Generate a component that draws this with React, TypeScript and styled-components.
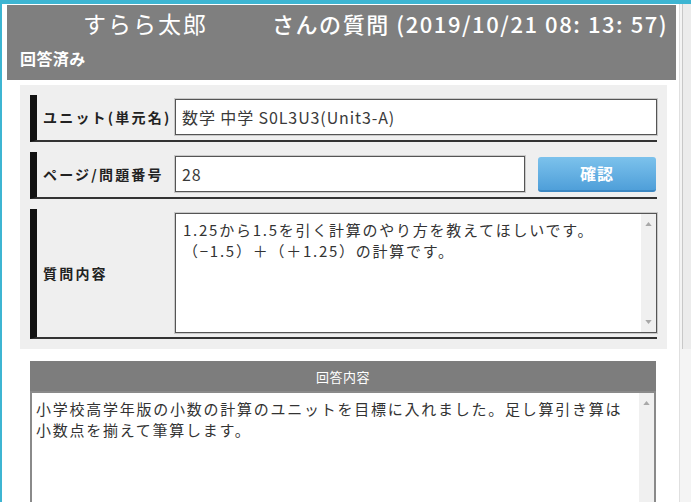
import React from 'react'
import styled, { createGlobalStyle } from 'styled-components'

const GlobalStyle = createGlobalStyle`
  html, body {
    margin: 0;
    padding: 0;
    background: #ffffff;
  }
  body {
    font-family: "Noto Sans CJK JP", "Noto Sans", "Liberation Sans", sans-serif;
    color: #333333;
  }
`

type Row = {
  label: string
  value: string
  withButton?: boolean
}

const rows: Row[] = [
  { label: 'ユニット(単元名)', value: '数学 中学 S0L3U3(Unit3-A)' },
  { label: 'ページ/問題番号', value: '28', withButton: true },
]

const questionLines = [
  '1.25から1.5を引く計算のやり方を教えてほしいです。',
  '（−1.5）＋（＋1.25）の計算です。',
]

const answerLines = [
  '小学校高学年版の小数の計算のユニットを目標に入れました。足し算引き算は',
  '小数点を揃えて筆算します。',
]

function ScrollTrack({ showDown = true }: { showDown?: boolean }) {
  return (
    <Track>
      <Arrow viewBox="0 0 8 5">
        <path d="M0 5 L4 0 L8 5 Z" fill="#a8a8a8" />
      </Arrow>
      {showDown && (
        <Arrow viewBox="0 0 8 5">
          <path d="M0 0 L4 5 L8 0 Z" fill="#a8a8a8" />
        </Arrow>
      )}
    </Track>
  )
}

export default function App() {
  return (
    <>
      <GlobalStyle />
      <Page>
        <Main>
          <Header>
            <TitleLine>
              <UserName>すらら太郎</UserName>
              <TitleText>さんの質問 (2019/10/21 08: 13: 57)</TitleText>
            </TitleLine>
            <Status>回答済み</Status>
          </Header>

          <FormPanel>
            {rows.map((row) => (
              <FieldRow key={row.label}>
                <Label>{row.label}</Label>
                <FieldBody>
                  <Input $narrow={row.withButton}>{row.value}</Input>
                  {row.withButton && <ConfirmButton type="button">確認</ConfirmButton>}
                </FieldBody>
              </FieldRow>
            ))}
            <FieldRow $tall>
              <Label>質問内容</Label>
              <FieldBody>
                <TextBox $height={120}>
                  <TextContent>
                    {questionLines.map((line) => (
                      <div key={line}>{line}</div>
                    ))}
                  </TextContent>
                  <ScrollTrack />
                </TextBox>
              </FieldBody>
            </FieldRow>
          </FormPanel>

          <AnswerSection>
            <AnswerHeader>回答内容</AnswerHeader>
            <AnswerBox>
              <TextContent $loose>
                {answerLines.map((line) => (
                  <div key={line}>{line}</div>
                ))}
              </TextContent>
              <ScrollTrack showDown={false} />
            </AnswerBox>
          </AnswerSection>
        </Main>
        <PageScroll>
          <PageThumb />
        </PageScroll>
      </Page>
    </>
  )
}

const Page = styled.div`
  width: 691px;
  height: 502px;
  box-sizing: border-box;
  border-top: 4px solid #3db5d2;
  display: flex;
  overflow: hidden;
`

const Main = styled.div`
  flex: 1;
  border-left: 2px solid #3db5d2;
  padding: 1px 3px 0 5px;
  display: flex;
  flex-direction: column;
  min-width: 0;
`

const Header = styled.header`
  flex-shrink: 0;
  background: #7f7f7f;
  color: #ffffff;
  height: 75px;
  box-sizing: border-box;
  padding: 4px 0 0 0;
`

const TitleLine = styled.div`
  display: flex;
  align-items: baseline;
  height: 28px;
  line-height: 28px;
  padding-left: 76px;
`

const UserName = styled.span`
  font-size: 23px;
  letter-spacing: 2px;
  width: 189px;
  white-space: nowrap;
`

const TitleText = styled.span`
  font-size: 22px;
  font-weight: 500;
  letter-spacing: 1.55px;
  white-space: nowrap;
`

const Status = styled.div`
  margin-top: 11px;
  line-height: 20px;
  padding-left: 13px;
  font-size: 16px;
  font-weight: bold;
  letter-spacing: 0.4px;
`

const FormPanel = styled.section`
  flex-shrink: 0;
  margin: 5px 9px 0 13px;
  background: #efefef;
  padding: 10px;
  display: flex;
  flex-direction: column;
  gap: 10px;
`

const FieldRow = styled.div<{ $tall?: boolean }>`
  display: flex;
  align-items: center;
  height: ${({ $tall }) => ($tall ? '130px' : '47px')};
  box-sizing: border-box;
  border-left: 7px solid #111111;
  border-bottom: 2px solid #333333;
  padding: 4px 0 5px 0;
`

const Label = styled.div`
  width: 138px;
  flex-shrink: 0;
  box-sizing: border-box;
  padding-left: 6px;
  font-size: 14px;
  font-weight: bold;
  letter-spacing: 2.2px;
  color: #222222;
  white-space: nowrap;
`

const FieldBody = styled.div`
  flex: 1;
  display: flex;
  align-items: center;
  gap: 13px;
  height: 100%;
`

const Input = styled.div<{ $narrow?: boolean }>`
  width: ${({ $narrow }) => ($narrow ? '350px' : '482px')};
  height: 36px;
  box-sizing: border-box;
  background: #ffffff;
  border: 1px solid #555555;
  box-shadow: 0 0 0 1px #c9c9c9;
  padding: 0 6px;
  display: flex;
  align-items: center;
  font-size: 16px;
  letter-spacing: 0.9px;
  color: #3a3a3a;
  white-space: nowrap;
`

const ConfirmButton = styled.button`
  width: 118px;
  height: 35px;
  border: none;
  border-bottom: 2px solid #3b87c2;
  border-radius: 3px;
  background: linear-gradient(#7cc2ec, #4f9fd9);
  color: #ffffff;
  font-family: inherit;
  font-size: 16px;
  font-weight: bold;
  letter-spacing: 1px;
  padding: 0;
`

const TextBox = styled.div<{ $height: number }>`
  width: 482px;
  height: ${({ $height }) => $height}px;
  box-sizing: border-box;
  background: #ffffff;
  border: 1px solid #555555;
  box-shadow: 0 0 0 1px #c9c9c9;
  display: flex;
`

const TextContent = styled.div<{ $loose?: boolean }>`
  flex: 1;
  padding: ${({ $loose }) => ($loose ? '5px 4px' : '5px 7px')};
  font-size: 15px;
  line-height: 21px;
  letter-spacing: 1.75px;
  color: #333333;
  white-space: nowrap;
  overflow: hidden;
`

const Track = styled.div`
  width: 15px;
  flex-shrink: 0;
  background: #f0f0f0;
  display: flex;
  flex-direction: column;
  justify-content: space-between;
  align-items: center;
  padding: 8px 0;
`

const Arrow = styled.svg`
  width: 7px;
  height: 4px;
`

const AnswerSection = styled.section`
  margin: 12px 20px 0 23px;
  display: flex;
  flex-direction: column;
  flex: 1;
  min-height: 0;
`

const AnswerHeader = styled.div`
  flex-shrink: 0;
  height: 30px;
  background: #7d7d7d;
  color: #ffffff;
  font-size: 13px;
  display: flex;
  align-items: center;
  justify-content: center;
  letter-spacing: 0.5px;
`

const AnswerBox = styled.div`
  flex: 1;
  display: flex;
  border: 2px solid #8a8a8a;
  border-bottom: none;
  background: #ffffff;
`

const PageScroll = styled.div`
  width: 11px;
  background: #f4f4f4;
  border-left: 1px solid #e0e0e0;
  display: flex;
  flex-direction: column;
`

const PageThumb = styled.div`
  height: 345px;
  margin-left: 2px;
  border-left: 1px solid #c8c8c8;
  background: #ececec;
`
